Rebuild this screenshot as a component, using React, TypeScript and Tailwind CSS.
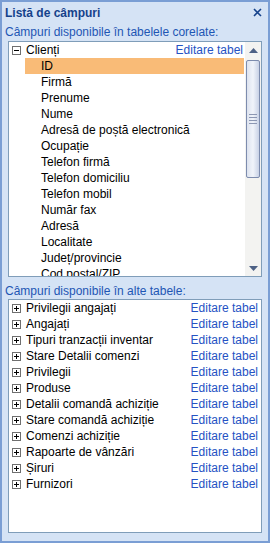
import React from "react";

const related = [
	"ID",
	"Firmă",
	"Prenume",
	"Nume",
	"Adresă de poștă electronică",
	"Ocupație",
	"Telefon firmă",
	"Telefon domiciliu",
	"Telefon mobil",
	"Număr fax",
	"Adresă",
	"Localitate",
	"Județ/provincie",
	"Cod poștal/ZIP",
];

const other = [
	"Privilegii angajați",
	"Angajați",
	"Tipuri tranzacții inventar",
	"Stare Detalii comenzi",
	"Privilegii",
	"Produse",
	"Detalii comandă achiziție",
	"Stare comandă achiziție",
	"Comenzi achiziție",
	"Rapoarte de vânzări",
	"Șiruri",
	"Furnizori",
];

const ExpandBox = ({ open }: { open: boolean }) => (
	<svg width="9" height="9" viewBox="0 0 9 9" className="shrink-0">
		<rect x="0.5" y="0.5" width="8" height="8" fill="#fff" stroke="#6f6f6f" />
		<line x1="2" y1="4.5" x2="7" y2="4.5" stroke="#000" />
		{!open && <line x1="4.5" y1="2" x2="4.5" y2="7" stroke="#000" />}
	</svg>
);

const Scrollbar = () => (
	<div className="w-[16px] shrink-0 flex flex-col bg-[#f3f3f1]">
		<div className="h-[16px] flex items-center justify-center">
			<svg width="9" height="5" viewBox="0 0 9 5">
				<polygon points="0,5 4.5,0 9,5" fill="#4d6185" />
			</svg>
		</div>
		<div className="mx-[1px] mt-[2px] h-[118px] rounded-[2px] border border-[#7d8cae] bg-gradient-to-r from-[#dde3ef] via-[#f1f4fa] to-[#c9d2e6] flex items-center justify-center">
			<div className="flex flex-col gap-[2px]">
				<div className="w-[8px] h-[1px] bg-[#8c97b3]" />
				<div className="w-[8px] h-[1px] bg-[#8c97b3]" />
				<div className="w-[8px] h-[1px] bg-[#8c97b3]" />
				<div className="w-[8px] h-[1px] bg-[#8c97b3]" />
			</div>
		</div>
		<div className="flex-1" />
		<div className="h-[16px] flex items-center justify-center">
			<svg width="9" height="5" viewBox="0 0 9 5">
				<polygon points="0,0 4.5,5 9,0" fill="#4d6185" />
			</svg>
		</div>
	</div>
);

export default function App() {
	return (
		<div
			className="w-[270px] h-[543px] border-2 border-[#7a9ed4] bg-[#d5e3f5] flex flex-col text-[12px] leading-[16px] text-black"
			style={{ fontFamily: '"Liberation Sans", Arial, sans-serif' }}
		>
			{/* title */}
			<div className="h-[21px] shrink-0 flex items-center justify-between pl-[3px] pr-[6px]">
				<span className="font-bold text-[#15428b]">Listă de câmpuri</span>
				<svg width="9" height="9" viewBox="0 0 9 9">
					<path d="M1 1 L8 8 M8 1 L1 8" stroke="#15428b" strokeWidth="1.6" />
				</svg>
			</div>
			<div className="h-[18px] shrink-0 pl-[3px] pt-[1px] text-[#1e56b4]">
				Câmpuri disponibile în tabelele corelate:
			</div>

			<div className="mx-[6px] h-[236px] shrink-0 border border-[#7f9db9] bg-white flex overflow-hidden">
				<div className="flex-1 flex flex-col overflow-hidden">
					<div className="h-[16px] shrink-0 flex items-center pl-[3px] pr-[2px]">
						<ExpandBox open />
						<span className="ml-[5px]">Clienți</span>
						<span className="ml-auto text-[#2552c3]">Editare tabel</span>
					</div>
					{related.map((f, i) => (
						<div
							key={f + i}
							className={
								i === 0
									? "h-[16px] shrink-0 ml-[16px] mr-[1px] pl-[16px] flex items-center bg-[#f9bb77]"
									: "h-[16px] shrink-0 ml-[16px] pl-[16px] flex items-center"
							}
						>
							{f}
						</div>
					))}
				</div>
				<Scrollbar />
			</div>

			<div className="h-[22px] shrink-0 pl-[3px] pt-[6px] text-[#1e56b4]">
				Câmpuri disponibile în alte tabele:
			</div>

			<div className="mx-[6px] h-[234px] shrink-0 border border-[#7f9db9] bg-white flex flex-col">
				{other.map((t) => (
					<div key={t} className="h-[16px] shrink-0 flex items-center pl-[3px] pr-[3px]">
						<ExpandBox open={false} />
						<span className="ml-[5px]">{t}</span>
						<span className="ml-auto text-[#2552c3]">Editare tabel</span>
					</div>
				))}
			</div>
		</div>
	);
}
